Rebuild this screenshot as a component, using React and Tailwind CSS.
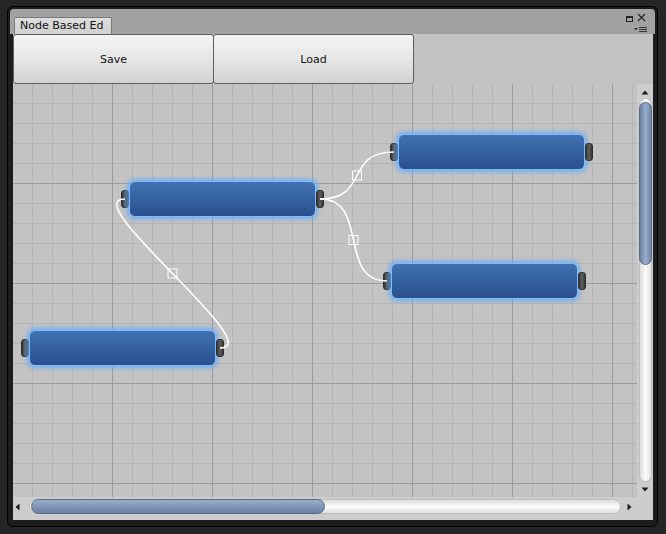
import React from 'react';

const nodes = [
  { id: 'a', pos: 'left-[108px] top-[97px]' },
  { id: 'b', pos: 'left-[377px] top-[50px]' },
  { id: 'c', pos: 'left-[370px] top-[179px]' },
  { id: 'd', pos: 'left-[8px] top-[246px]' },
];

// bezier from in-point to out-point, tangents pulled 50px sideways
const links = [
  { d: 'M381 68 C331 68 357 115 307 115', mx: 344, my: 91.5 },
  { d: 'M374 197 C324 197 357 115 307 115', mx: 340.5, my: 156 },
  { d: 'M112 115 C62 115 257 264 207 264', mx: 159.5, my: 189.5 },
];

function Knob() {
  return (
    <div className="w-[8px] h-[18px] rounded-[3px] bg-[linear-gradient(to_right,#353535,#616161_50%,#353535)] border border-[#2e2e2e]" />
  );
}

function Node({ pos }) {
  return (
    <div className={`absolute ${pos} h-[36px] flex items-center`}>
      <Knob />
      <div className="w-[187px] h-[36px] rounded-[6px] border border-[#7cbcff] bg-[linear-gradient(to_bottom,#4171b2,#3663a3_45%,#2a4f8e)] shadow-[0_0_4px_2px_rgba(96,170,250,0.85)]" />
      <Knob />
    </div>
  );
}

function Arrow({ dir }) {
  const pts = {
    up: '0.5,4.5 7.5,4.5 4,0.5',
    down: '0.5,0.5 7.5,0.5 4,4.5',
    left: '4.5,0.5 4.5,7.5 0.5,4',
    right: '0.5,0.5 0.5,7.5 4.5,4',
  }[dir];
  const vert = dir === 'up' || dir === 'down';
  return (
    <svg width={vert ? 8 : 5} height={vert ? 5 : 8}>
      <polygon points={pts} fill="#1d1d1d" />
    </svg>
  );
}

export default function App() {
  return (
    <div className="w-[666px] h-[534px] bg-[#252525] pt-[6px] pl-[7px] overflow-hidden font-['DejaVu_Sans',sans-serif]">
      <div className="w-[651px] h-[521px] rounded-[6px] border border-black bg-[#1c1c1c] p-[2px] flex flex-col">
        {/* tab strip */}
        <div className="h-[25px] bg-[#a2a2a2] rounded-t-[4px] flex items-end justify-between pl-[4px]">
          <div className="w-[98px] h-[17px] bg-[linear-gradient(to_bottom,#dedede,#d0d0d0)] border border-b-0 border-[#7a7a7a] rounded-t-[2px] text-[11px] leading-[16px] text-[#111] pl-[5px]">
            Node Based Ed
          </div>
          <svg width="26" height="24" className="self-start mt-[1px] mr-[5px]">
            <rect x="2.5" y="6.5" width="6" height="5" fill="none" stroke="#222" />
            <rect x="2" y="6" width="7" height="2" fill="#222" />
            <path d="M14 4 L21 11 M21 4 L14 11" stroke="#222" strokeWidth="1.1" />
            <polygon points="10,18 14,18 12,20.5" fill="#333" />
            <path d="M15 17.5 H23 M15 19.5 H23 M15 21.5 H23" stroke="#333" strokeWidth="1" />
          </svg>
        </div>

        <div className="ml-[3px] w-[640px] h-[486px] bg-[#c2c2c2] flex flex-col">
          {/* toolbar */}
          <div className="h-[50px] flex">
            <button className="w-[201px] h-[50px] pt-[2px] border border-[#5e5e5e] rounded-[3px] bg-[linear-gradient(to_bottom,#f4f4f4,#e6e6e6_50%,#d2d2d2)] text-[11px] text-[#111]">
              Save
            </button>
            <button className="-ml-[1px] w-[201px] h-[50px] pt-[2px] border border-[#5e5e5e] rounded-[3px] bg-[linear-gradient(to_bottom,#f4f4f4,#e6e6e6_50%,#d2d2d2)] text-[11px] text-[#111]">
              Load
            </button>
          </div>

          <div className="h-[413px] flex">
            {/* canvas */}
            <div className="relative w-[624px] h-[413px] overflow-hidden bg-[#c3c3c3] [background-image:linear-gradient(to_right,#9c9c9c_1px,transparent_1px),linear-gradient(to_bottom,#9c9c9c_1px,transparent_1px),linear-gradient(to_right,#b5b5b5_1px,transparent_1px),linear-gradient(to_bottom,#b5b5b5_1px,transparent_1px)] [background-size:100px_100px,100px_100px,20px_20px,20px_20px] [background-position:99px_99px,99px_99px,19px_19px,19px_19px]">
              {nodes.map(n => <Node key={n.id} pos={n.pos} />)}
              <svg width="624" height="413" className="absolute inset-0 pointer-events-none">
                {links.map((l, i) => (
                  <g key={i}>
                    <path d={l.d} fill="none" stroke="#fff" strokeWidth="1.6" />
                    <rect x={l.mx - 4.5} y={l.my - 4.5} width="9" height="9" fill="none" stroke="#fff" strokeWidth="1" />
                  </g>
                ))}
              </svg>
            </div>

            {/* vertical scrollbar */}
            <div className="w-[16px] bg-[#cdcdcd] flex flex-col items-center">
              <div className="h-[14px] flex items-center justify-center pt-[2px]">
                <Arrow dir="up" />
              </div>
              <div className="flex-1 w-[13px] rounded-full border border-[#bdbdbd] bg-[linear-gradient(to_right,#dcdcdc,#fbfbfb_50%,#e2e2e2)] pt-[3px]">
                <div className="h-[163px] -mx-[1px] rounded-full border border-[#56698a] bg-[linear-gradient(to_right,#6a81a4,#9aaecb_50%,#6f86a8)]" />
              </div>
              <div className="h-[15px] flex items-center justify-center pb-[1px]">
                <Arrow dir="down" />
              </div>
            </div>
          </div>

          {/* horizontal scrollbar */}
          <div className="h-[23px] flex bg-[#cdcdcd]">
            <div className="w-[624px] flex items-start pt-[2px]">
              <div className="w-[16px] h-[15px] flex items-center justify-start pl-[2px]">
                <Arrow dir="left" />
              </div>
              <div className="w-[592px] h-[15px] rounded-full border border-[#bdbdbd] bg-[linear-gradient(to_bottom,#dcdcdc,#fbfbfb_50%,#e2e2e2)] pl-[1px]">
                <div className="w-[294px] h-[15px] -mt-[1px] rounded-full border border-[#56698a] bg-[linear-gradient(to_bottom,#9aaecb,#8196b6_50%,#6a81a4)]" />
              </div>
              <div className="w-[16px] h-[15px] flex items-center justify-center">
                <Arrow dir="right" />
              </div>
            </div>
            <div className="w-[16px]" />
          </div>
        </div>
      </div>
    </div>
  );
}
